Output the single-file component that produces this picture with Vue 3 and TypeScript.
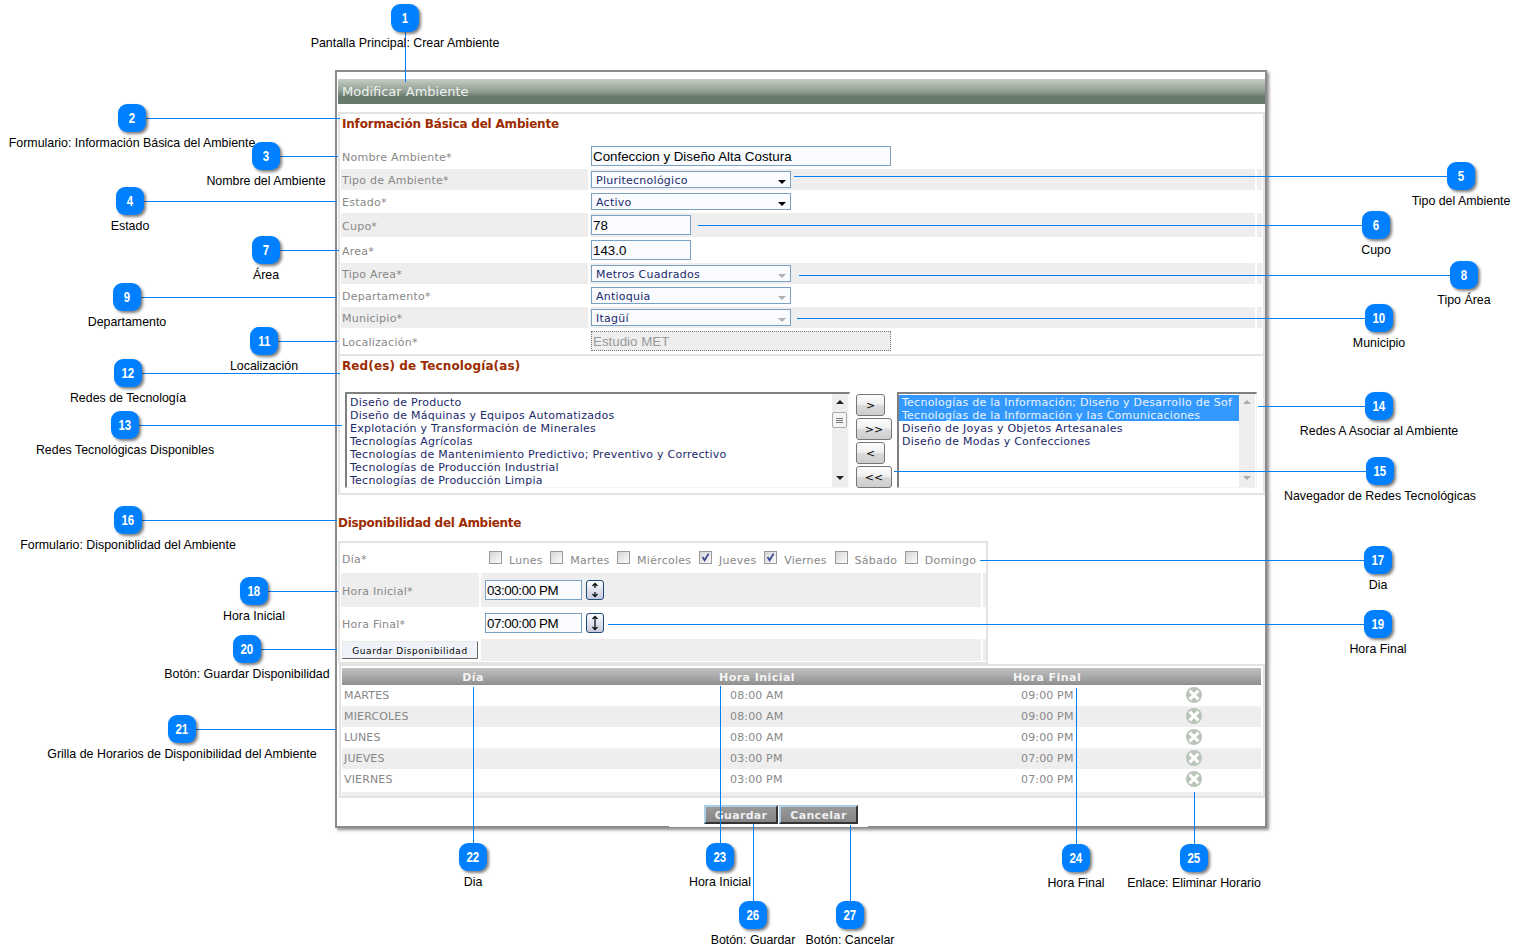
<script setup lang="ts">
interface Note {
  n: number
  x: number
  y: number
  label: string
  // far end of the leader line, on the same row or column as the bubble
  tx?: number
  ty?: number
}

const notes: Note[] = [
  { n: 1, x: 405, y: 18, label: 'Pantalla Principal: Crear Ambiente', ty: 82 },
  { n: 2, x: 132, y: 118, label: 'Formulario: Información Básica del Ambiente', tx: 340 },
  { n: 3, x: 266, y: 156, label: 'Nombre del Ambiente', tx: 338 },
  { n: 4, x: 130, y: 201, label: 'Estado', tx: 337 },
  { n: 5, x: 1461, y: 176, label: 'Tipo del Ambiente', tx: 794 },
  { n: 6, x: 1376, y: 225, label: 'Cupo', tx: 698 },
  { n: 7, x: 266, y: 250, label: 'Área', tx: 339 },
  { n: 8, x: 1464, y: 275, label: 'Tipo Área', tx: 799 },
  { n: 9, x: 127, y: 297, label: 'Departamento', tx: 337 },
  { n: 10, x: 1379, y: 318, label: 'Municipio', tx: 797 },
  { n: 11, x: 264, y: 341, label: 'Localización', tx: 338 },
  { n: 12, x: 128, y: 373, label: 'Redes de Tecnología', tx: 340 },
  { n: 13, x: 125, y: 425, label: 'Redes Tecnológicas Disponibles', tx: 342 },
  { n: 14, x: 1379, y: 406, label: 'Redes A Asociar al Ambiente', tx: 1258 },
  { n: 15, x: 1380, y: 471, label: 'Navegador de Redes Tecnológicas', tx: 894 },
  { n: 16, x: 128, y: 520, label: 'Formulario: Disponiblidad del Ambiente', tx: 337 },
  { n: 17, x: 1378, y: 560, label: 'Dia', tx: 980 },
  { n: 18, x: 254, y: 591, label: 'Hora Inicial', tx: 338 },
  { n: 19, x: 1378, y: 624, label: 'Hora Final', tx: 608 },
  { n: 20, x: 247, y: 649, label: 'Botón: Guardar Disponibilidad', tx: 337 },
  { n: 21, x: 182, y: 729, label: 'Grilla de Horarios de Disponibilidad del Ambiente', tx: 336 },
  { n: 22, x: 473, y: 857, label: 'Dia', ty: 687 },
  { n: 23, x: 720, y: 857, label: 'Hora Inicial', ty: 686 },
  { n: 24, x: 1076, y: 858, label: 'Hora Final', ty: 688 },
  { n: 25, x: 1194, y: 858, label: 'Enlace: Eliminar Horario', ty: 792 },
  { n: 26, x: 753, y: 915, label: 'Botón: Guardar', ty: 824 },
  { n: 27, x: 850, y: 915, label: 'Botón: Cancelar', ty: 825 },
]

const fields = [
  { label: 'Nombre Ambiente*', kind: 'input', value: 'Confeccion y Diseño Alta Costura', h: 23, cls: 'wide up' },
  { label: 'Tipo de Ambiente*', kind: 'select', value: 'Pluritecnológico', h: 21, dark: true },
  { label: 'Estado*', kind: 'select', value: 'Activo', h: 23, dark: true },
  { label: 'Cupo*', kind: 'input', value: '78', h: 24, cls: 'short' },
  { label: 'Area*', kind: 'input', value: '143.0', h: 26, cls: 'short' },
  { label: 'Tipo Area*', kind: 'select', value: 'Metros Cuadrados', h: 21 },
  { label: 'Departamento*', kind: 'select', value: 'Antioquia', h: 23 },
  { label: 'Municipio*', kind: 'select', value: 'Itagüí', h: 21 },
  { label: 'Localización*', kind: 'input', value: 'Estudio MET', h: 26, cls: 'wide locked' },
]

const available = [
  'Diseño de Producto',
  'Diseño de Máquinas y Equipos Automatizados',
  'Explotación y Transformación de Minerales',
  'Tecnologías Agrícolas',
  'Tecnologías de Mantenimiento Predictivo; Preventivo y Correctivo',
  'Tecnologías de Producción Industrial',
  'Tecnologías de Producción Limpia',
]

const chosen = [
  { text: 'Tecnologías de la Información; Diseño y Desarrollo de Sof', on: true },
  { text: 'Tecnologías de la Información y las Comunicaciones', on: true },
  { text: 'Diseño de Joyas y Objetos Artesanales', on: false },
  { text: 'Diseño de Modas y Confecciones', on: false },
]

const moves = [
  { text: '>', wide: false },
  { text: '>>', wide: true },
  { text: '<', wide: false },
  { text: '<<', wide: true },
]

const days = [
  { name: 'Lunes', on: false },
  { name: 'Martes', on: false },
  { name: 'Miércoles', on: false },
  { name: 'Jueves', on: true },
  { name: 'Viernes', on: true },
  { name: 'Sábado', on: false },
  { name: 'Domingo', on: false },
]

const schedule = [
  ['MARTES', '08:00 AM', '09:00 PM'],
  ['MIERCOLES', '08:00 AM', '09:00 PM'],
  ['LUNES', '08:00 AM', '09:00 PM'],
  ['JUEVES', '03:00 PM', '07:00 PM'],
  ['VIERNES', '03:00 PM', '07:00 PM'],
]
</script>

<template>
  <div class="page">
    <div class="win">
      <div class="win-title">Modificar Ambiente</div>

      <section class="box first">
        <h3 class="head">Información Básica del Ambiente</h3>
        <div
          v-for="(f, i) in fields"
          :key="f.label"
          class="row"
          :class="{ odd: i % 2 === 1 }"
          :style="{ height: f.h + 'px' }"
        >
          <div class="cell lab">{{ f.label }}</div>
          <div class="cell val">
            <input v-if="f.kind === 'input'" class="txt" :class="f.cls" :value="f.value" readonly />
            <div v-else class="sel">
              {{ f.value }}
              <i class="caret" :class="{ dark: f.dark }" />
            </div>
          </div>
          <div class="cell end" />
        </div>
      </section>

      <section class="box second">
        <h3 class="head">Red(es) de Tecnología(as)</h3>
        <div class="picker">
          <div class="list left">
            <div class="items">
              <div v-for="t in available" :key="t" class="item">{{ t }}</div>
            </div>
            <div class="bar">
              <i class="tri up" />
              <div class="thumb"><b /><b /><b /></div>
              <i class="tri down" />
            </div>
          </div>
          <div class="moves">
            <button v-for="m in moves" :key="m.text" class="move" :class="{ wide: m.wide }">{{ m.text }}</button>
          </div>
          <div class="list right">
            <div class="items">
              <div v-for="c in chosen" :key="c.text" class="item" :class="{ on: c.on }">{{ c.text }}</div>
            </div>
            <div class="bar dim">
              <i class="tri up" />
              <i class="tri down" />
            </div>
          </div>
        </div>
      </section>

      <h3 class="head outer">Disponibilidad del Ambiente</h3>
      <section class="avail">
        <div class="arow day-row">
          <div class="acell alab">Día*</div>
          <div class="acell aval days">
            <label v-for="d in days" :key="d.name" class="day">
              <span class="check">
                <svg v-if="d.on" width="11" height="11" viewBox="0 0 11 11">
                  <path d="M2.5 5 L4.6 8.2 L8.6 1.6" fill="none" stroke="#3d4a92" stroke-width="1.8" />
                </svg>
              </span>
              {{ d.name }}
            </label>
          </div>
          <div class="acell aend" />
        </div>
        <div class="arow shade time-a">
          <div class="acell alab">Hora Inicial*</div>
          <div class="acell aval">
            <input class="txt time" value="03:00:00 PM" readonly />
            <span class="spin">
              <svg width="16" height="18" viewBox="0 0 16 18">
                <path d="M8 2.5 V7 M5.5 5 L8 2.5 L10.5 5 M8 11 V15.5 M5.5 13 L8 15.5 L10.5 13" fill="none" stroke="#111" stroke-width="1.3" />
              </svg>
            </span>
          </div>
          <div class="acell aend" />
        </div>
        <div class="arow time-b">
          <div class="acell alab">Hora Final*</div>
          <div class="acell aval">
            <input class="txt time" value="07:00:00 PM" readonly />
            <span class="spin">
              <svg width="16" height="18" viewBox="0 0 16 18">
                <path d="M8 2.5 V15.5 M5.5 5 L8 2.5 L10.5 5 M5.5 13 L8 15.5 L10.5 13" fill="none" stroke="#111" stroke-width="1.3" />
              </svg>
            </span>
          </div>
          <div class="acell aend" />
        </div>
        <div class="arow shade save-row">
          <div class="acell save-cell"><button class="save">Guardar Disponibilidad</button></div>
          <div class="acell aval" />
          <div class="acell aend" />
        </div>
      </section>

      <section class="grid">
        <div class="g-row g-head">
          <div>Día</div>
          <div>Hora Inicial</div>
          <div>Hora Final</div>
          <div />
        </div>
        <div v-for="(r, i) in schedule" :key="r[0]" class="g-row g-line" :class="{ odd: i % 2 === 1 }">
          <div class="g-day">{{ r[0] }}</div>
          <div class="g-a">{{ r[1] }}</div>
          <div class="g-b">{{ r[2] }}</div>
          <div class="g-x">
            <svg width="16" height="16" viewBox="0 0 16 16">
              <circle cx="8" cy="8" r="8" fill="#b9c5b8" />
              <path d="M3.6 3.6 L12.4 12.4 M12.4 3.6 L3.6 12.4" stroke="#fff" stroke-width="3" />
            </svg>
          </div>
        </div>
        <div class="g-foot" />
      </section>

      <div class="actions">
        <button class="act save-btn">Guardar</button>
        <button class="act cancel-btn">Cancelar</button>
      </div>
      <div class="notch" />
    </div>

    <svg class="lines" width="1517" height="950">
      <template v-for="a in notes" :key="a.n">
        <line
          :x1="(a.tx === undefined ? a.x + 0.5 : a.x)"
          :y1="(a.tx === undefined ? a.y : a.y + 0.5)"
          :x2="(a.tx === undefined ? a.x + 0.5 : a.tx)"
          :y2="(a.tx === undefined ? a.ty : a.y + 0.5)"
        />
      </template>
    </svg>

    <template v-for="a in notes" :key="a.n">
      <div class="bubble" :style="{ left: a.x - 14 + 'px', top: a.y - 14 + 'px' }"><span class="num">{{ a.n }}</span></div>
      <div class="note" :style="{ left: a.x + 'px', top: a.y + 18 + 'px' }">{{ a.label }}</div>
    </template>
  </div>
</template>

<style>
body {
  background: #fff;
}
</style>

<style scoped>
.page {
  position: relative;
  width: 1517px;
  height: 950px;
  padding: 70px 0 0 335px;
  box-sizing: border-box;
  overflow: hidden;
  font-family: 'DejaVu Sans', Verdana, sans-serif;
  font-size: 11px;
  letter-spacing: 0.25px;
  color: #888;
}

/* window */
.win {
  position: relative;
  box-sizing: border-box;
  width: 932px;
  height: 758px;
  padding-top: 7px;
  border: 2px solid #8b8b8b;
  box-shadow: 2px 2px 3px rgba(0, 0, 0, 0.45);
  background: #fff;
}
.win-title {
  margin-left: 1px;
  width: 927px;
  height: 25px;
  padding-left: 4px;
  box-sizing: border-box;
  line-height: 25px;
  font-size: 13px;
  letter-spacing: 0;
  color: #eef1ee;
  background: linear-gradient(#c6cec4 0, #8e9c90 50%, #66796b 72%, #66796b 100%);
}
.box {
  margin-left: 1px;
  width: 927px;
  box-sizing: border-box;
  border: 2px solid #e3e3e3;
}
.first {
  margin-top: 8px;
  height: 244px;
}
.second {
  height: 139px;
  border-top: 0;
  padding-bottom: 5px;
}
.head {
  margin: 0;
  padding-left: 2px;
  font-size: 12px;
  font-weight: bold;
  line-height: 18px;
  color: #9c2c00;
}
.first .head {
  height: 32px;
  line-height: 20px;
  letter-spacing: -0.2px;
}
.second .head {
  height: 36px;
  line-height: 21px;
  letter-spacing: 0.12px;
}
.outer {
  margin: 18px 0 10px 1px;
  height: 18px;
  line-height: 20px;
  padding-left: 0;
  letter-spacing: -0.3px;
}

/* form rows */
.row {
  display: grid;
  grid-template-columns: 247px 665px 5px;
  column-gap: 2px;
  margin-left: 1px;
}
.cell {
  display: flex;
  align-items: center;
}
.row.odd .cell {
  background: #eeeeee;
}
.lab {
  padding: 2px 0 0 1px;
}
.row:nth-of-type(1) .lab {
  padding-top: 0;
}
.val {
  padding-left: 1px;
}
.txt {
  box-sizing: border-box;
  height: 20px;
  padding: 0 1px;
  border: 1px solid #7ba0c0;
  outline: 0;
  background: #f9fbfe;
  color: #000;
  font-family: 'Liberation Sans', Arial, sans-serif;
  font-size: 13.33px;
  letter-spacing: 0;
}
.wide {
  width: 300px;
}
.short {
  width: 100px;
}
.up {
  margin-bottom: 3px;
}
.locked {
  border: 1px dotted #777;
  background: #eeeeee;
  color: #999;
}
.sel {
  position: relative;
  box-sizing: border-box;
  width: 200px;
  height: 17px;
  padding-left: 4px;
  line-height: 17px;
  border: 1px solid #7ba0c0;
  background: #f9fbfe;
  color: #1b2a6b;
  white-space: nowrap;
}
.caret {
  position: absolute;
  right: 4px;
  top: 8px;
  border: 4px solid transparent;
  border-top: 4px solid #b0b0b0;
  border-bottom: 0;
}
.caret.dark {
  border-top-color: #000;
}

/* list pickers */
.picker {
  display: flex;
  padding-left: 5px;
}
.list {
  display: flex;
  box-sizing: border-box;
  height: 96px;
  border-top: 2px solid #808080;
  border-left: 2px solid #808080;
  border-right: 1px solid #f4f4f4;
  border-bottom: 1px solid #f4f4f4;
}
.left {
  width: 505px;
}
.right {
  width: 360px;
}
.items {
  flex: 1;
  min-width: 0;
  padding-top: 1px;
  color: #1b2a6b;
}
.item {
  height: 13px;
  line-height: 13px;
  padding-left: 3px;
  white-space: nowrap;
}
.left .items {
  padding-top: 2px;
}
.right .item {
  line-height: 15px;
}
.item.on {
  background: #3399ff;
  color: #eaf4ff;
}
.bar {
  position: relative;
  width: 16px;
  margin-right: 1px;
  background: #eeeeee;
}
.tri {
  position: absolute;
  left: 4px;
  border: 4px solid transparent;
}
.tri.up {
  top: 6px;
  border-top: 0;
  border-bottom: 4px solid #222;
}
.tri.down {
  bottom: 7px;
  border-bottom: 0;
  border-top: 4px solid #222;
}
.bar.dim .tri.up {
  border-bottom-color: #aaa;
}
.bar.dim .tri.down {
  border-top-color: #aaa;
}
.thumb {
  position: absolute;
  left: 0;
  top: 18px;
  box-sizing: border-box;
  width: 15px;
  height: 16px;
  display: flex;
  flex-direction: column;
  justify-content: center;
  gap: 1px;
  padding: 0 3px;
  border: 1px solid #aaa;
  border-radius: 2px;
  background: #f4f4f4;
}
.thumb b {
  display: block;
  height: 1px;
  background: #777;
}
.moves {
  width: 36px;
  margin: 2px 5px 0 6px;
  display: flex;
  flex-direction: column;
  gap: 2px;
}
.move {
  box-sizing: border-box;
  width: 29px;
  height: 22px;
  padding: 0;
  border: 1px solid #777;
  border-radius: 3px;
  background: linear-gradient(#fbfbfb 0, #f0f0f0 45%, #d8d8d8 55%, #cfcfcf 100%);
  font-family: inherit;
  font-size: 11px;
  color: #000;
}
.move.wide {
  width: 36px;
}

/* availability block */
.avail {
  box-sizing: border-box;
  margin-left: 1px;
  width: 650px;
  height: 123px;
  border: 2px solid #e3e3e3;
}
.arow {
  display: grid;
  grid-template-columns: 138px 500px 3px;
  column-gap: 2px;
  margin-left: 1px;
}
.day-row {
  height: 30px;
}
.time-a {
  height: 34px;
}
.time-b {
  height: 32px;
}
.save-row {
  height: 22px;
}
.acell {
  display: flex;
  align-items: center;
}
.shade .acell {
  background: #eeeeee;
}
.alab {
  padding: 2px 0 0 1px;
}
.aval {
  padding-left: 4px;
}
.days {
  padding: 0 0 0 8px;
  gap: 7.7px;
}
.day {
  display: flex;
  align-items: center;
  gap: 7px;
  padding-top: 4px;
  white-space: nowrap;
}
.check {
  box-sizing: border-box;
  display: block;
  width: 13px;
  height: 13px;
  margin-top: -6px;
  border: 1px solid #999;
  background: linear-gradient(135deg, #d6d6d6, #fbfbfb);
}
.time {
  width: 97px;
  letter-spacing: -0.4px;
}
.spin {
  box-sizing: border-box;
  display: flex;
  align-items: center;
  justify-content: center;
  width: 18px;
  height: 20px;
  margin-left: 4px;
  border: 1px solid #1d4a78;
  border-radius: 3px;
  background: linear-gradient(#fbfcff, #c6cade);
}
.shade .save-cell {
  background: #fff;
}
.save {
  box-sizing: border-box;
  width: 136px;
  height: 18px;
  margin-left: 1px;
  padding: 1px 0 0;
  border: 1px solid;
  border-color: #e8e8e8 #666 #666 #e8e8e8;
  background: #f0f2fa;
  font-family: inherit;
  font-size: 9px;
  letter-spacing: 0.55px;
  color: #000;
}

/* schedule */
.grid {
  box-sizing: border-box;
  margin-left: 2px;
  width: 926px;
  height: 134px;
  padding: 2px 2px 0 1px;
  border: 2px solid #e3e3e3;
}
.g-row {
  display: grid;
  grid-template-columns: 262px 306px 274px 77px;
}
.g-head {
  height: 17px;
  line-height: 19px;
  text-align: center;
  font-weight: bold;
  letter-spacing: 0.45px;
  color: #f4f4f4;
  background: linear-gradient(#c2c2c2, #8f8f8f);
}
.g-line {
  box-sizing: border-box;
  height: 21px;
  padding-bottom: 1px;
  align-items: center;
  font-size: 11px;
  letter-spacing: 0.15px;
  color: #888;
}
.g-line.odd {
  padding-bottom: 2px;
  background: #eeeeee;
  border-top: 1px solid #f2f2f2;
}
.g-day {
  padding-left: 2px;
}
.g-a {
  padding-left: 126px;
}
.g-b {
  padding-left: 111px;
}
.g-x {
  display: flex;
  padding-left: 2px;
}
.g-foot {
  height: 4px;
  margin-top: 2px;
  margin-right: -1px;
  background: #eeeeee;
}
.actions {
  display: flex;
  gap: 1px;
  margin: 7px 0 0 367px;
}
.act {
  box-sizing: border-box;
  height: 19px;
  padding: 1px 0 0;
  border: 2px solid;
  border-color: #a9d0e8 #333 #333 #a9d0e8;
  background: linear-gradient(#9a9a9a, #848484);
  font-family: inherit;
  font-size: 11px;
  font-weight: bold;
  letter-spacing: 0.3px;
  color: #eeeeee;
}
.save-btn {
  width: 74px;
}
.cancel-btn {
  width: 79px;
}
.notch {
  position: absolute;
  left: 332px;
  bottom: -1px;
  width: 199px;
  height: 2px;
  background: #fff;
}

/* annotations */
.lines {
  position: absolute;
  left: 0;
  top: 0;
  pointer-events: none;
}
.lines line {
  stroke: #0080f8;
  stroke-width: 1;
}
.bubble {
  position: absolute;
  width: 28px;
  height: 28px;
  border-radius: 9px;
  background: #0080ff;
  box-shadow: 2px 2px 3px rgba(0, 0, 0, 0.5);
  text-align: center;
  line-height: 28px;
  font-family: 'Liberation Sans', Arial, sans-serif;
  font-size: 14px;
  font-weight: bold;
  letter-spacing: 0;
  color: #fff;
}
.num {
  display: inline-block;
  transform: scaleX(0.82);
}
.note {
  position: absolute;
  transform: translateX(-50%);
  line-height: 14px;
  white-space: nowrap;
  font-family: 'Liberation Sans', Arial, sans-serif;
  font-size: 12.4px;
  letter-spacing: 0;
  color: #000;
}
</style>
